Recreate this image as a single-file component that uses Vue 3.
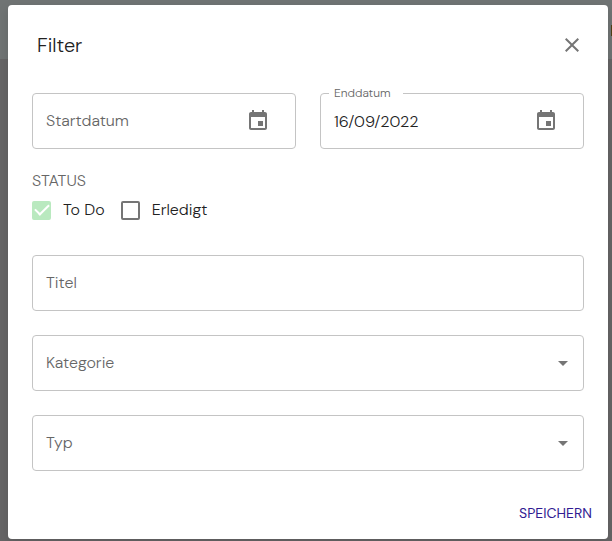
<script setup>
import { ref } from 'vue'

const startDate = ref('')
const endDate = ref('16/09/2022')
const todo = ref(true)
const done = ref(false)
const title = ref('')
const category = ref('')
const type = ref('')
</script>

<template>
  <div class="backdrop">
    <span class="marker" aria-hidden="true"></span>
    <form class="dialog" role="dialog" aria-labelledby="dialog-title" @submit.prevent>
      <header class="head">
        <h2 id="dialog-title">Filter</h2>
        <button type="button" class="icon-button" aria-label="Schließen">
          <svg viewBox="0 0 24 24" width="24" height="24"><path d="M19 6.41 17.59 5 12 10.59 6.41 5 5 6.41 10.59 12 5 17.59 6.41 19 12 13.41 17.59 19 19 17.59 13.41 12z" /></svg>
        </button>
      </header>

      <div class="body">
        <div class="dates">
          <div class="field" :class="{ filled: startDate }">
            <label for="start">Startdatum</label>
            <input id="start" v-model="startDate" type="text" />
            <button type="button" class="icon-button calendar" aria-label="Startdatum wählen">
              <svg viewBox="0 0 24 24" width="24" height="24"><path d="M17 12h-5v5h5v-5zM16 1v2H8V1H6v2H5c-1.110 0-1.990.9-1.990 2L3 19c0 1.100.89 2 2 2h14c1.100 0 2-.9 2-2V5c0-1.100-.9-2-2-2h-1V1h-2zm3 18H5V8h14v11z" /></svg>
            </button>
          </div>
          <div class="field" :class="{ filled: endDate }">
            <label for="end">Enddatum</label>
            <input id="end" v-model="endDate" type="text" />
            <button type="button" class="icon-button calendar" aria-label="Enddatum wählen">
              <svg viewBox="0 0 24 24" width="24" height="24"><path d="M17 12h-5v5h5v-5zM16 1v2H8V1H6v2H5c-1.110 0-1.990.9-1.990 2L3 19c0 1.100.89 2 2 2h14c1.100 0 2-.9 2-2V5c0-1.100-.9-2-2-2h-1V1h-2zm3 18H5V8h14v11z" /></svg>
            </button>
          </div>
        </div>

        <fieldset class="status">
          <legend>STATUS</legend>
          <div class="checks">
            <label class="check"><input v-model="todo" type="checkbox" /><span>To Do</span></label>
            <label class="check"><input v-model="done" type="checkbox" /><span>Erledigt</span></label>
          </div>
        </fieldset>

        <div class="stack">
          <div class="field" :class="{ filled: title }">
            <label for="title">Titel</label>
            <input id="title" v-model="title" type="text" />
          </div>
          <div class="field" :class="{ filled: category }">
            <label for="category">Kategorie</label>
            <select id="category" v-model="category"><option value=""></option></select>
            <svg class="arrow" viewBox="0 0 24 24" width="24" height="24"><path d="M7 10l5 5 5-5z" /></svg>
          </div>
          <div class="field" :class="{ filled: type }">
            <label for="type">Typ</label>
            <select id="type" v-model="type"><option value=""></option></select>
            <svg class="arrow" viewBox="0 0 24 24" width="24" height="24"><path d="M7 10l5 5 5-5z" /></svg>
          </div>
        </div>
      </div>

      <footer class="actions">
        <button type="submit" class="save">SPEICHERN</button>
      </footer>
    </form>
  </div>
</template>

<style>
body {
  background: #666566;
}
</style>

<style scoped>
.backdrop,
.backdrop * {
  box-sizing: border-box;
}
.backdrop {
  position: relative;
  min-height: 100vh;
  padding: 5px 4px 2px 8px;
  background: linear-gradient(#707474 0 59px, #666566 59px);
  font-family: "DM Sans", Inter, "Liberation Sans", sans-serif;
  font-size: 16px;
  font-weight: 300;
  line-height: 24px;
  color: #212121;
}
.marker {
  position: absolute;
  top: 25px;
  right: 0;
  width: 1px;
  height: 11px;
  background: #4c3d14;
}
.dialog {
  background: #fff;
  border-radius: 4px;
  box-shadow: 0 4px 12px rgba(0, 0, 0, 0.12);
}
.head {
  display: flex;
  align-items: center;
  justify-content: space-between;
  padding: 24px 24px 24px 29px;
}
h2 {
  margin: 0;
  font-size: 20px;
  font-weight: 300;
  line-height: 32px;
}
button,
input,
select {
  font: inherit;
  color: inherit;
}
.icon-button {
  display: flex;
  padding: 0;
  border: 0;
  background: none;
  cursor: pointer;
}
svg {
  display: block;
  fill: #757575;
}
.body {
  padding: 8px 24px 0;
}
.dates {
  display: grid;
  grid-template-columns: repeat(2, minmax(0, 1fr));
  gap: 24px;
}
.field {
  position: relative;
  display: flex;
  align-items: center;
  height: 56px;
  border: 1px solid #c4c4c4;
  border-radius: 4px;
}
.field label {
  position: absolute;
  left: 13px;
  top: 15px;
  color: #666;
  pointer-events: none;
}
.field.filled label {
  left: 8px;
  top: -9px;
  padding: 0 13px 0 5px;
  background: #fff;
  font-size: 12px;
  line-height: 16px;
}
.field input,
.field select {
  flex: 1;
  min-width: 0;
  height: 100%;
  padding: 0 13px;
  border: 0;
  outline: 0;
  background: none;
  appearance: none;
}
.calendar {
  margin-right: 25px;
}
.arrow {
  position: absolute;
  right: 8px;
  pointer-events: none;
}
.status {
  min-width: 0;
  margin: 20px 0 0;
  padding: 0;
  border: 0;
}
legend {
  padding: 0;
  color: #666;
}
.checks {
  display: flex;
  gap: 16px;
  padding-top: 5px;
}
.check {
  display: flex;
  align-items: center;
  gap: 12px;
}
.check input {
  display: grid;
  place-items: center;
  width: 19px;
  height: 19px;
  margin: 0;
  border: 2px solid #757575;
  border-radius: 2px;
  appearance: none;
}
.check input:checked {
  border-color: #b9e9bf;
  background: #b9e9bf;
}
.check input:checked::before {
  content: "";
  width: 12px;
  height: 6px;
  border: solid #fff;
  border-width: 0 0 2px 2px;
  transform: translateY(-2px) rotate(-45deg);
}
.stack {
  display: grid;
  gap: 24px;
  padding-top: 33px;
}
.actions {
  display: flex;
  justify-content: flex-end;
  padding: 24px 8px 8px;
}
.save {
  padding: 6px 8px;
  border: 0;
  background: none;
  color: #311b92;
  font-size: 14px;
  font-weight: 400;
  cursor: pointer;
}
</style>
